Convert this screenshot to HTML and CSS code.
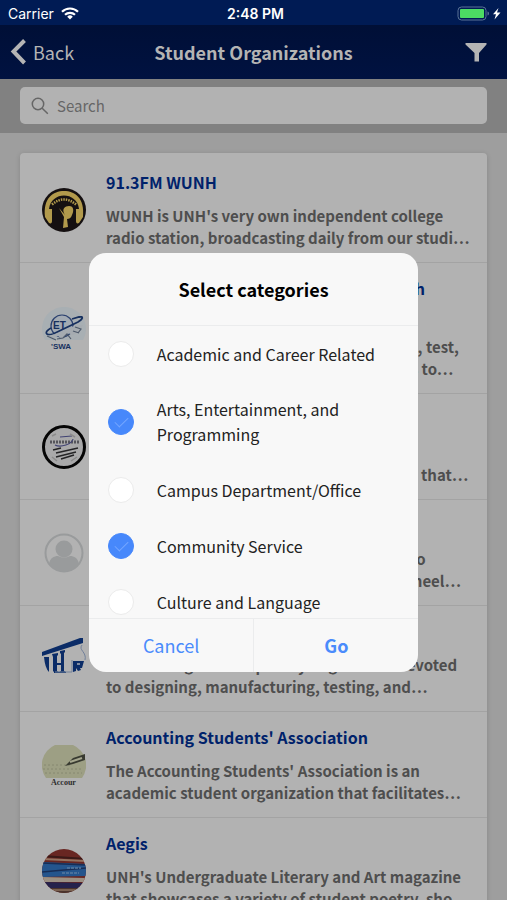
FILE: index.html
```html
<!DOCTYPE html>
<html lang="en">
<head>
<meta charset="utf-8">
<meta name="viewport" content="width=device-width, initial-scale=1">
<title>Student Organizations</title>
<link rel="stylesheet" href="styles.css">
</head>
<body>
<div class="status">
  <span class="carrier">Carrier
    <svg width="18" height="13" viewBox="0 0 18 13" fill="none" stroke="#fff" stroke-width="2.2"><path d="M1 4.8a11.4 11.4 0 0 1 16 0M4 7.8a7.2 7.2 0 0 1 10 0"/><path d="M9 12.5 6.2 9.7a4 4 0 0 1 5.6 0z" fill="#fff" stroke="none"/></svg>
  </span>
  <span class="clock">2:48 PM</span>
  <span class="battery">
    <svg width="46" height="15" viewBox="0 0 46 15"><rect x="1" y="1" width="28" height="13" rx="3.500" fill="none" stroke="#5b7396"/><rect x="3" y="3" width="24" height="9" rx="1" fill="#4cdc63"/><path d="M30.500 5.500c2 .5 2 3.500 0 4z" fill="#5b7396"/><path d="M41.500 2 36 8.200h3L37.500 13.500l6-7h-3.500z" fill="#fff"/></svg>
  </span>
</div>
<div class="app">
  <header class="nav">
    <button class="back" type="button"><svg width="16" height="26" viewBox="0 0 16 26" fill="none" stroke="#b4b4b4" stroke-width="4"><path d="M14.500 1.500 3.500 12.500l11 11.500"/></svg>Back</button>
    <h1>Student Organizations</h1>
    <button class="filter" type="button" aria-label="Filter"><svg width="22" height="19" viewBox="0 0 22 19" fill="#b4b4b4"><path d="M.5 0h21v1.500L14 10v8.500H9.500V10L.5 1.500z"/></svg></button>
  </header>
  <div class="searchbar">
    <label class="search"><svg width="18" height="18" viewBox="0 0 18 18" fill="none" stroke="#666" stroke-width="1.500"><circle cx="7" cy="7" r="5.700"/><path d="m11.200 11.200 5.600 5.600"/></svg><input type="search" placeholder="Search" aria-label="Search"></label>
  </div>
  <main class="content">
    <ul class="orgs">
      <li class="org">
        <svg class="logo" viewBox="0 0 44 44"><circle cx="22" cy="22" r="22" fill="#151011"/><path d="M3 29C1 10 11 3 22 3s21 7 19 26l-4 6c-2 1-3 0-3-2V22C34 12 28 9 22 9s-12 3-12 13v11c0 2-1 3-3 2z" fill="#b29a4c"/><path d="M7 21C9 3 35 3 37 21z" fill="#151011"/><path d="M10 16.500q12-10 24 0" fill="none" stroke="#b29a4c" stroke-width="2.500" stroke-dasharray="1.500 1"/><path d="M12 21h20v15H12z" fill="#151011"/><path d="M21 40l1-11-5-9 6 7c-4-6 0-9 4-9 5 0 5 5 3 9-1 3-3 4-5 4l1 8z" fill="#b29a4c"/></svg>
        <div class="info"><h2>91.3FM WUNH</h2><p>WUNH is UNH's very own independent college<br>radio station, broadcasting daily from our studi…</p></div>
      </li>
      <li class="org">
        <svg class="logo" viewBox="0 0 44 44"><path d="M3 34a22 22 0 1 1 38 0z" fill="#a8afb3"/><circle cx="20" cy="20" r="11" fill="#a3abb3" stroke="#2b416f" stroke-width="1.200"/><path d="M9 22c-7 4-6 8 2 6l25-12c5-3 6-6 1-5l-7 2" fill="none" stroke="#17305f" stroke-width="1.800"/><path d="m6 30 14-4 12-6 9-1-3 6-7 4-5-2-6 6-4-3-5 2z" fill="#a5abb0"/><path d="m15 33 6-1 4-4 4 5m2-8 6 2m-4-6 6 2-3 4M5 30l9 4" fill="none" stroke="#4e5a6b" stroke-width="1.200"/><text x="11" y="23" class="mark tiny">ET</text><text x="9" y="43" class="mark small">'SWA</text></svg>
        <div class="info"><h2>ET-NavSwarm - Undergraduate Research<br>Team</h2><p>An interdisciplinary team to design, create, test,<br>and deploy autonomous swarming vessels to…</p></div>
      </li>
      <li class="org">
        <svg class="logo" viewBox="0 0 44 44"><circle cx="22" cy="22" r="20.500" fill="#a9a9aa" stroke="#050505" stroke-width="3"/><path d="M8 17h29" stroke="#55555b" stroke-width="3" stroke-dasharray="2 1"/><path d="M13 20c6 3 17-1 18-6M18 12l12-1" fill="none" stroke="#414374" stroke-width="1.200"/><path d="m14 28 22-5M14 32l20-5M19 34l13-4M11 25l8-2" stroke="#242426" stroke-width="1.500"/><path d="m10 11 4-2m14 0 5 3M10 32l5 4m14 0 6-4" stroke="#8b8b8b" stroke-width="1.500"/></svg>
        <div class="info"><h2>A Cappella</h2><p>Alabaster Blue is a student group of<br>singers bringing music to our campus here that…</p></div>
      </li>
      <li class="org">
        <svg class="logo" viewBox="0 0 44 44"><circle cx="22" cy="22" r="18.500" fill="none" stroke="#999b9c" stroke-width="2"/><circle cx="22" cy="18" r="8.500" fill="#999b9c"/><path d="M7 33c1-6 5-8 9-8 4 2 8 2 12 0 4 0 8 2 9 8a19 19 0 0 1-30 0" fill="#999b9c"/></svg>
        <div class="info"><h2>Able Wildcats</h2><p>A great student organization dedicated also<br>raise awareness for all those using such wheel…</p></div>
      </li>
      <li class="org">
        <svg class="logo" viewBox="0 0 44 44"><path d="M0 15 38 1h3v5L0 19z" fill="#0b2c67"/><path d="M2 20h5v15q-4-4-5-15M10 17l6-1v2l-1 1v7h4v-9l-1-1v-2l5-1v2l-1 1v18l2 1v1h-7v-1l2-1v-6h-4v6l2 1v1h-5v-1l-1-1V20z" fill="#0b2c67"/><path d="M31 24h11l-2 7h-2l1 2-3 1-2-3v3l-3 1z" fill="#0b2c67"/><path d="M35 27h3" stroke="#a8adb5" stroke-width="1.500"/><path d="M30 23v12H13M40 8c-4 5 5 7 3 15" fill="none" stroke="#71809a"/></svg>
        <div class="info"><h2>Precision Racing</h2><p>UNH Racing is a completely engineered devoted<br>to designing, manufacturing, testing, and…</p></div>
      </li>
      <li class="org">
        <svg class="logo" viewBox="0 0 44 44"><path d="M4 35a22 22 0 0 1 9-33h18a22 22 0 0 1 9 33z" fill="#9d9f84"/><path d="M2 22h26M1 26h40M3 30h37" stroke="#868870" stroke-dasharray="2 2"/><path d="m23 23 8-8 12-4v6l-12 4z" fill="#383a30"/><path d="m28 19 12-4" stroke="#a5a68e" stroke-width="2"/><text x="9" y="42" class="mark script">Accour</text></svg>
        <div class="info"><h2>Accounting Students' Association</h2><p>The Accounting Students' Association is an<br>academic student organization that facilitates…</p></div>
      </li>
      <li class="org">
        <svg class="logo" viewBox="0 0 44 44"><defs><clipPath id="disc"><circle cx="22" cy="22" r="22"/></clipPath></defs><g clip-path="url(#disc)"><path fill="#682622" d="M0 0h44v44H0z"/><path d="M0 7l44 3" stroke="#3a1917" stroke-width="2"/><path d="M0 10l44 2" stroke="#94725f" stroke-width="2"/><path d="m0 13 44 2v12L0 28z" fill="#24558d"/><path d="m0 14 44 2M0 23l44-4" stroke="#182d55" stroke-width="1.500"/><path d="M25 19h14M20 24h17" stroke="#5579a0" stroke-width="1.500" stroke-dasharray="3 1"/><path d="m0 28 44 1v4H0z" fill="#9c9184"/><path d="m0 33 44 1v6H0z" fill="#25224c"/><path d="M0 39h44v5H0z" fill="#4a332c"/><path d="M8 41h30" stroke="#8b715c" stroke-width="1.500"/></g></svg>
        <div class="info"><h2>Aegis</h2><p>UNH's Undergraduate Literary and Art magazine<br>that showcases a variety of student poetry, sho…</p></div>
      </li>
    </ul>
  </main>
  <div class="overlay">
    <form class="dialog" role="dialog" aria-labelledby="dialog-title">
      <h2 class="dialog-title" id="dialog-title">Select categories</h2>
      <div class="choices">
        <label class="choice"><input type="checkbox"><span>Academic and Career Related</span></label>
        <label class="choice"><input type="checkbox" checked><span>Arts, Entertainment, and Programming</span></label>
        <label class="choice"><input type="checkbox"><span>Campus Department/Office</span></label>
        <label class="choice"><input type="checkbox" checked><span>Community Service</span></label>
        <label class="choice"><input type="checkbox"><span>Culture and Language</span></label>
      </div>
      <div class="actions"><button type="button">Cancel</button><button type="button" class="go">Go</button></div>
    </form>
  </div>
</div>
</body>
</html>
```

FILE: styles.css
```css
* { box-sizing: border-box; }
body {
  margin: 0;
  height: 100vh;
  display: flex;
  flex-direction: column;
  overflow: hidden;
  font-family: "Noto Sans CJK JP", "Noto Sans", sans-serif;
}
h1, h2, p, ul { margin: 0; padding: 0; }
button, input { font: inherit; border: 0; background: none; padding: 0; }
svg { display: block; flex: none; }

.status {
  display: grid;
  grid-template-columns: 1fr auto 1fr;
  align-items: center;
  height: 25px;
  padding: 2px 4px 0 8px;
  background: #001b54;
  color: #fff;
  font: 14px Inter, sans-serif;
}
.carrier { display: flex; align-items: center; gap: 7px; }
.clock { font-weight: 600; }
.battery { justify-self: end; }

.app {
  position: relative;
  flex: 1;
  min-height: 0;
  display: flex;
  flex-direction: column;
  overflow: hidden;
}
.nav {
  flex: none;
  display: grid;
  grid-template-columns: 1fr auto 1fr;
  align-items: center;
  height: 54px;
  padding: 0 10px;
  background: linear-gradient(#000f36, #001241);
  color: #b4b4b4;
}
.nav h1 { font-size: 18px; font-weight: 700; }
.back { display: flex; align-items: center; gap: 7px; color: inherit; font-size: 18px; }
.filter { justify-self: end; margin-right: 10px; }

.searchbar {
  flex: none;
  padding: 8px 20px 9px;
  background: #818181;
}
.search {
  display: flex;
  align-items: center;
  gap: 8px;
  height: 37px;
  padding: 0 11px;
  border-radius: 5px;
  background: #b2b2b2;
}
.search input { flex: 1; min-width: 0; outline: 0; font-size: 15px; appearance: none; }
.search input::placeholder { color: #666; opacity: 1; }

.content { flex: 1; min-height: 0; overflow: hidden; padding: 20px 20px 0; background: #9e9e9e; }
.orgs {
  list-style: none;
  padding-top: 4px;
  border-radius: 4px;
  background: #b2b2b2;
  box-shadow: 0 1px 5px rgba(0, 0, 0, .15);
}
.org {
  display: flex;
  align-items: center;
  gap: 20px;
  padding: 13px 12px 13px 22px;
  border-bottom: 1px solid #a3a3a3;
}
.logo { width: 44px; height: 44px; }
.mark { font: bold 12px "Liberation Sans", sans-serif; fill: #17305f; }
.mark.tiny { font-size: 10px; }
.mark.small { font-size: 8px; }
.mark.script { font: bold 8px "Liberation Serif", serif; fill: #2c2c2c; }
.info { white-space: nowrap; }
.info h2 { color: #00226b; font-size: 16px; line-height: 25px; font-weight: 700; }
.info p { margin-top: 10px; color: #4e4e4e; font-size: 15px; line-height: 22px; font-weight: 700; }

.overlay {
  position: absolute;
  inset: 0;
  display: flex;
  align-items: center;
  justify-content: center;
}
.dialog {
  width: 65%;
  border-radius: 17px;
  background: #f8f8f8;
  overflow: hidden;
}
.dialog-title {
  padding: 24px 16px 23px;
  border-bottom: 1px solid #ebeced;
  text-align: center;
  font-size: 18px;
  line-height: 25px;
  font-weight: 700;
}
.choices { height: 292px; overflow: hidden; }
.choice {
  display: flex;
  align-items: center;
  gap: 23px;
  padding: 15px 30px 15px 19px;
  color: #222;
  font-size: 16px;
  line-height: 25px;
}
.choice input {
  flex: none;
  appearance: none;
  width: 26px;
  height: 26px;
  margin: 0;
  border: 1px solid #ebebeb;
  border-radius: 50%;
  background: #fff;
}
.choice input:checked { border-color: #4788fb; background: #4788fb; }
.choice input:checked::after {
  content: "";
  display: block;
  width: 12px;
  height: 6px;
  margin: 7px 0 0 6px;
  border: solid #74a6ff;
  border-width: 0 0 1px 1px;
  transform: rotate(-45deg);
}
.actions { display: grid; grid-template-columns: 1fr 1fr; border-top: 1px solid #ebeced; }
.actions button { height: 53px; padding-bottom: 2px; color: #4a8bfc; font-size: 18px; }
.actions .go { border-left: 1px solid #ebeced; font-weight: 700; }
```
